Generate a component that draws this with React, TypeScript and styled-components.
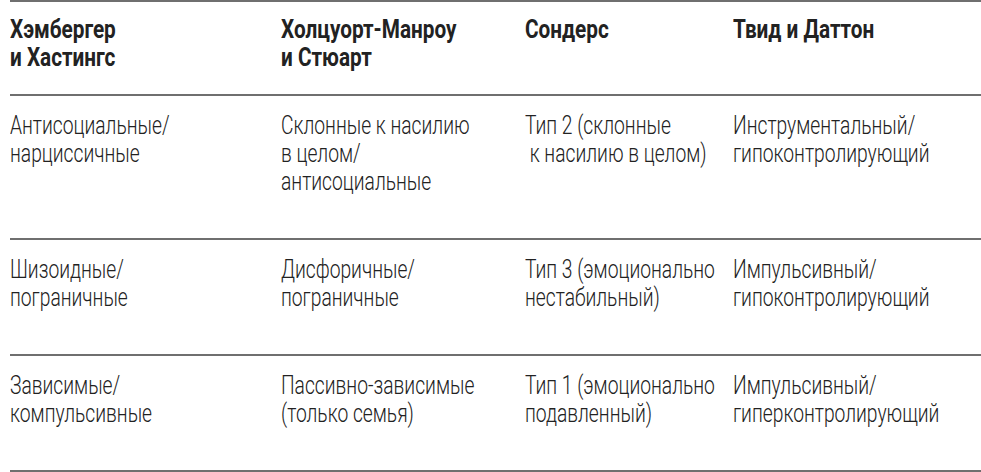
import React from "react";
import styled, { createGlobalStyle } from "styled-components";

type Row = string[][];

const header: Row = [
  ["Хэмбергер", "и Хастингс"],
  ["Холцуорт-Манроу", "и Стюарт"],
  ["Сондерс"],
  ["Твид и Даттон"],
];

const rows: Row[] = [
  [
    ["Антисоциальные/", "нарциссичные"],
    ["Склонные к насилию", "в целом/", "антисоциальные"],
    ["Тип 2 (склонные", " к насилию в целом)"],
    ["Инструментальный/", "гипоконтролирующий"],
  ],
  [
    ["Шизоидные/", "пограничные"],
    ["Дисфоричные/", "пограничные"],
    ["Тип 3 (эмоционально", "нестабильный)"],
    ["Импульсивный/", "гипоконтролирующий"],
  ],
  [
    ["Зависимые/", "компульсивные"],
    ["Пассивно-зависимые", "(только семья)"],
    ["Тип 1 (эмоционально", "подавленный)"],
    ["Импульсивный/", "гиперконтролирующий"],
  ],
];

function App() {
  return (
    <>
      <GlobalStyle />
      <Table>
        <HeadRow>
          {header.map((cell, i) => (
            <HeadCell key={i}>
              {cell.map((line, j) => (
                <Line key={j}>{line}</Line>
              ))}
            </HeadCell>
          ))}
        </HeadRow>
        {rows.map((row, r) => (
          <BodyRow key={r}>
            {row.map((cell, i) => (
              <BodyCell key={i}>
                {cell.map((line, j) => (
                  <Line key={j}>{line}</Line>
                ))}
              </BodyCell>
            ))}
          </BodyRow>
        ))}
      </Table>
    </>
  );
}
export default App;

const GlobalStyle = createGlobalStyle`
  body {
    margin: 0;
    background: #ffffff;
  }
`;

const Table = styled.div`
  margin-left: 10px;
  width: 971px;
  border-top: 2px solid #6f6f6f;
  font-family: "Roboto", "Liberation Sans", sans-serif;
  line-height: 28px;
  color: #222222;
`;

const RowBase = styled.div`
  display: grid;
  grid-template-columns: 271px 244px 208px 248px;
  border-bottom: 2px solid #6f6f6f;
`;

const HeadRow = styled(RowBase)`
  padding: 14px 0 22px;
`;

const BodyRow = styled(RowBase)`
  padding: 15px 0 43px;
`;

// the book face is a narrow grotesque, so squeeze the text horizontally
const HeadCell = styled.div`
  font-size: 25px;
  font-weight: 700;
  transform: scaleX(0.83);
  transform-origin: left top;
`;

const BodyCell = styled.div`
  font-size: 26px;
  font-weight: 300;
  transform: scaleX(0.74);
  transform-origin: left top;
`;

const Line = styled.div`
  white-space: pre;
`;
